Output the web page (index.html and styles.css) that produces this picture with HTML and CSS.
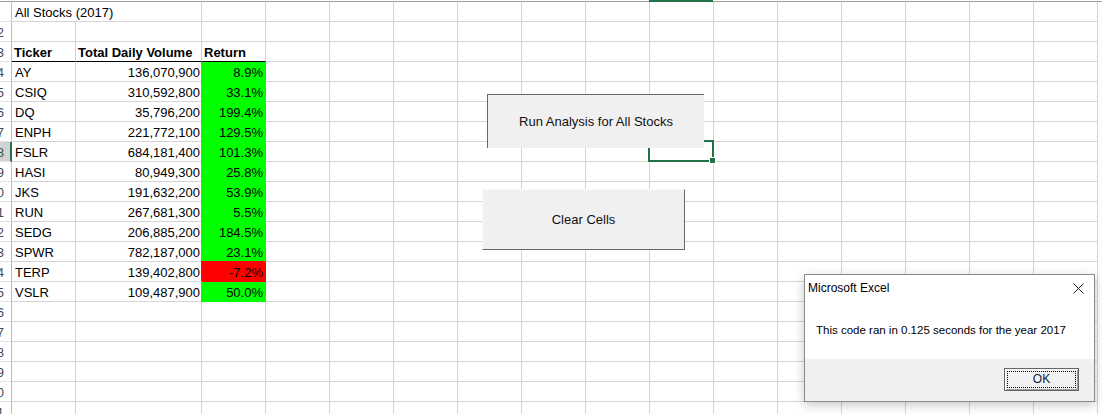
FILE: index.html
```html
<!DOCTYPE html>
<html>
<head>
<meta charset="utf-8">
<title>All Stocks (2017)</title>
<link rel="stylesheet" href="styles.css">
</head>
<body>
<div class="book">
  <div class="colbar"></div>
  <div class="sheet">
    <div class="row"><div class="h"></div><div class="title">All Stocks (2017)</div><div></div><div></div><div></div><div></div><div></div><div></div><div></div><div></div><div></div><div></div><div></div><div></div><div></div><div></div></div>
    <div class="row"><div class="h">2</div><div></div><div></div><div></div><div></div><div></div><div></div><div></div><div></div><div></div><div></div><div></div><div></div><div></div><div></div><div></div><div></div><div></div></div>
    <div class="row"><div class="h">3</div><div class="hd">Ticker</div><div class="hd">Total Daily Volume</div><div class="hd">Return</div><div></div><div></div><div></div><div></div><div></div><div></div><div></div><div></div><div></div><div></div><div></div><div></div><div></div><div></div></div>
    <div class="row"><div class="h">4</div><div class="tk">AY</div><div class="num">136,070,900</div><div class="ret g">8.9%</div><div></div><div></div><div></div><div></div><div></div><div></div><div></div><div></div><div></div><div></div><div></div><div></div><div></div><div></div></div>
    <div class="row"><div class="h">5</div><div class="tk">CSIQ</div><div class="num">310,592,800</div><div class="ret g">33.1%</div><div></div><div></div><div></div><div></div><div></div><div></div><div></div><div></div><div></div><div></div><div></div><div></div><div></div><div></div></div>
    <div class="row"><div class="h">6</div><div class="tk">DQ</div><div class="num">35,796,200</div><div class="ret g">199.4%</div><div></div><div></div><div></div><div></div><div></div><div></div><div></div><div></div><div></div><div></div><div></div><div></div><div></div><div></div></div>
    <div class="row"><div class="h">7</div><div class="tk">ENPH</div><div class="num">221,772,100</div><div class="ret g">129.5%</div><div></div><div></div><div></div><div></div><div></div><div></div><div></div><div></div><div></div><div></div><div></div><div></div><div></div><div></div></div>
    <div class="row"><div class="h sel">8</div><div class="tk">FSLR</div><div class="num">684,181,400</div><div class="ret g">101.3%</div><div></div><div></div><div></div><div></div><div></div><div></div><div></div><div></div><div></div><div></div><div></div><div></div><div></div><div></div></div>
    <div class="row"><div class="h">9</div><div class="tk">HASI</div><div class="num">80,949,300</div><div class="ret g">25.8%</div><div></div><div></div><div></div><div></div><div></div><div></div><div></div><div></div><div></div><div></div><div></div><div></div><div></div><div></div></div>
    <div class="row"><div class="h">10</div><div class="tk">JKS</div><div class="num">191,632,200</div><div class="ret g">53.9%</div><div></div><div></div><div></div><div></div><div></div><div></div><div></div><div></div><div></div><div></div><div></div><div></div><div></div><div></div></div>
    <div class="row"><div class="h">11</div><div class="tk">RUN</div><div class="num">267,681,300</div><div class="ret g">5.5%</div><div></div><div></div><div></div><div></div><div></div><div></div><div></div><div></div><div></div><div></div><div></div><div></div><div></div><div></div></div>
    <div class="row"><div class="h">12</div><div class="tk">SEDG</div><div class="num">206,885,200</div><div class="ret g">184.5%</div><div></div><div></div><div></div><div></div><div></div><div></div><div></div><div></div><div></div><div></div><div></div><div></div><div></div><div></div></div>
    <div class="row"><div class="h">13</div><div class="tk">SPWR</div><div class="num">782,187,000</div><div class="ret g">23.1%</div><div></div><div></div><div></div><div></div><div></div><div></div><div></div><div></div><div></div><div></div><div></div><div></div><div></div><div></div></div>
    <div class="row"><div class="h">14</div><div class="tk">TERP</div><div class="num">139,402,800</div><div class="ret r">-7.2%</div><div></div><div></div><div></div><div></div><div></div><div></div><div></div><div></div><div></div><div></div><div></div><div></div><div></div><div></div></div>
    <div class="row"><div class="h">15</div><div class="tk">VSLR</div><div class="num">109,487,900</div><div class="ret g">50.0%</div><div></div><div></div><div></div><div></div><div></div><div></div><div></div><div></div><div></div><div></div><div></div><div></div><div></div><div></div></div>
    <div class="row"><div class="h">16</div><div></div><div></div><div></div><div></div><div></div><div></div><div></div><div></div><div></div><div></div><div></div><div></div><div></div><div></div><div></div><div></div><div></div></div>
    <div class="row"><div class="h">17</div><div></div><div></div><div></div><div></div><div></div><div></div><div></div><div></div><div></div><div></div><div></div><div></div><div></div><div></div><div></div><div></div><div></div></div>
    <div class="row"><div class="h">18</div><div></div><div></div><div></div><div></div><div></div><div></div><div></div><div></div><div></div><div></div><div></div><div></div><div></div><div></div><div></div><div></div><div></div></div>
    <div class="row"><div class="h">19</div><div></div><div></div><div></div><div></div><div></div><div></div><div></div><div></div><div></div><div></div><div></div><div></div><div></div><div></div><div></div><div></div><div></div></div>
    <div class="row"><div class="h">20</div><div></div><div></div><div></div><div></div><div></div><div></div><div></div><div></div><div></div><div></div><div></div><div></div><div></div><div></div><div></div><div></div><div></div></div>
    <div class="row"><div class="h">21</div><div></div><div></div><div></div><div></div><div></div><div></div><div></div><div></div><div></div><div></div><div></div><div></div><div></div><div></div><div></div><div></div><div></div></div>
  </div>

  <div class="colmark"></div>
  <div class="selection"><span class="handle"></span></div>

  <button class="btn btn-run">Run Analysis for All Stocks</button>
  <button class="btn btn-clear">Clear Cells</button>

  <div class="dialog">
    <div class="dlg-body">
      <div class="dlg-title">
        <span>Microsoft Excel</span>
        <svg class="dlg-close" width="11" height="11" viewBox="0 0 11 11"><path d="M0.5 0.5 L10.5 10.5 M10.5 0.5 L0.5 10.5" stroke="#1a1a1a" stroke-width="1" fill="none"/></svg>
      </div>
      <div class="dlg-msg">This code ran in 0.125 seconds for the year 2017</div>
    </div>
    <div class="dlg-foot">
      <button class="ok"><span class="focus">OK</span></button>
    </div>
  </div>
</div>
</body>
</html>
```

FILE: styles.css
```css
html, body {
  margin: 0;
  padding: 0;
  overflow: hidden;
  background: #ffffff;
}

.book {
  position: relative;
  width: 1102px;
  height: 414px;
  overflow: hidden;
  font-family: "Liberation Sans", Arial, sans-serif;
  font-size: 13px;
  color: #000;
}

.colbar {
  height: 1px;
  border-bottom: 1px solid #9f9f9f;
}

.row {
  display: grid;
  grid-template-columns: 12px 64px 126px repeat(14, 64px);
  height: 20px;
}

.row > div {
  box-sizing: border-box;
  height: 20px;
  border-right: 1px solid #d4d4d4;
  border-bottom: 1px solid #d4d4d4;
  padding-top: 1px;
  line-height: 19px;
  white-space: nowrap;
  overflow: hidden;
}

.row > .h {
  display: flex;
  justify-content: flex-end;
  padding-right: 7px;
  border-bottom-color: #e1e1e1;
  border-right-color: #bdbdbd;
  color: #404a5c;
  font-size: 13px;
}

.row > .h.sel {
  background: #d2d2d2;
  border-right: 2px solid #217346;
  padding-right: 6px;
  color: #2a5a3f;
}

.row > .title {
  grid-column: span 2;
  padding-left: 3px;
  overflow: visible;
}

.row > .hd {
  font-weight: bold;
  padding-left: 2px;
  border-bottom-color: #000;
}

.row > .tk {
  padding-left: 3px;
}

.row > .num {
  text-align: right;
  padding-right: 1px;
}

.row > .ret {
  text-align: right;
  padding-right: 2px;
}

.row > .g {
  background: #00ff00;
  border-right-color: #00ff00;
  border-bottom-color: #00ff00;
  box-shadow: -1px 0 0 #00ff00;
}

.row > .r {
  background: #ff0000;
  border-right-color: #ff0000;
  border-bottom-color: #ff0000;
  box-shadow: -1px -1px 0 #ff0000;
}

/* selected column marker on the header edge */
.colmark {
  position: absolute;
  left: 649px;
  top: 0;
  width: 64px;
  height: 2px;
  background: #217346;
}

/* active cell J8 */
.selection {
  position: absolute;
  left: 648px;
  top: 140px;
  width: 66px;
  height: 22px;
  box-sizing: border-box;
  border: 2px solid #217346;
}

.handle {
  position: absolute;
  right: -4px;
  bottom: -4px;
  width: 5px;
  height: 5px;
  background: #217346;
  border: 1px solid #fff;
}

.btn {
  position: absolute;
  z-index: 2;
  margin: 0;
  padding: 0;
  box-sizing: border-box;
  background: #f0f0f0;
  border: 0;
  font-family: "Liberation Sans", Arial, sans-serif;
  font-size: 13px;
  color: #111;
}

.btn-run {
  left: 487px;
  top: 94px;
  width: 217px;
  height: 54px;
  border-top: 1px solid #696969;
  border-left: 1px solid #696969;
}

.btn-clear {
  left: 482px;
  top: 189px;
  width: 203px;
  height: 61px;
  border-right: 1px solid #696969;
  border-bottom: 1px solid #696969;
  border-top: 1px solid #fafafa;
  border-left: 1px solid #fafafa;
}

.dialog {
  position: absolute;
  z-index: 3;
  left: 804px;
  top: 274px;
  width: 291px;
  height: 128px;
  box-sizing: border-box;
  border: 1px solid #8a8a8a;
  background: #fff;
  box-shadow: 0 3px 10px rgba(0, 0, 0, 0.22);
  font-family: "Liberation Sans", Arial, sans-serif;
  font-size: 12px;
  color: #000;
  display: flex;
  flex-direction: column;
}

.dlg-body {
  height: 84px;
  background: #fff;
}

.dlg-title {
  display: flex;
  justify-content: space-between;
  align-items: flex-start;
  padding: 5px 10px 0 3px;
  line-height: 16px;
}

.dlg-close {
  margin-top: 3px;
  display: block;
}

.dlg-msg {
  margin-top: 26px;
  padding-left: 11px;
  line-height: 16px;
  font-size: 11.5px;
}

.dlg-foot {
  flex: 1;
  background: #f0f0f0;
  display: flex;
  justify-content: flex-end;
  align-items: flex-start;
  padding: 9px 15px 0 0;
}

.ok {
  width: 75px;
  height: 23px;
  margin: 0;
  padding: 2px;
  box-sizing: border-box;
  background: #f2f2f2;
  border: 1px solid #666;
  box-shadow: inset 1px 1px 0 #fff, inset -1px -1px 0 #9a9a9a;
  font-family: "Liberation Sans", Arial, sans-serif;
  font-size: 12px;
  color: #10183a;
  display: flex;
}

.focus {
  flex: 1;
  border: 1px dotted #000;
  display: flex;
  align-items: center;
  justify-content: center;
  line-height: 15px;
}
```
